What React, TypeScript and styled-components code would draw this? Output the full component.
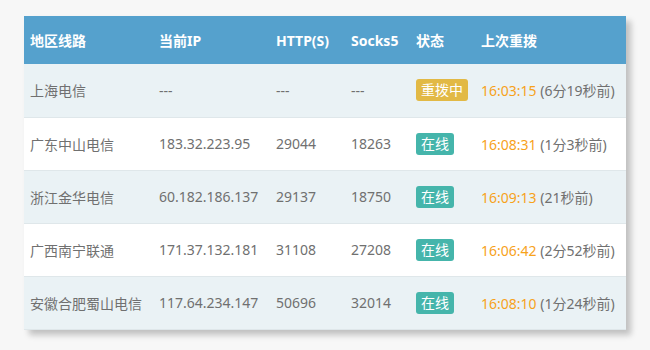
import React from 'react';
import styled, { createGlobalStyle } from 'styled-components';

const GlobalStyle = createGlobalStyle`
  html, body {
    margin: 0;
    padding: 0;
    background: #f7f7f7;
  }
  body {
    font-family: "Noto Sans", "Noto Sans CJK SC", sans-serif;
  }
  *, *::before, *::after {
    box-sizing: border-box;
  }
`;

const Page = styled.div`
  padding: 16px 24px;
`;

const Table = styled.table`
  width: 602px;
  border-collapse: collapse;
  table-layout: fixed;
  box-shadow: 5px 5px 6px rgba(0, 0, 0, 0.22);
  font-size: 14px;
  color: #707070;
`;

const Head = styled.th<{ $w: number }>`
  width: ${(p) => p.$w}px;
  height: 48px;
  padding: 0 0 0 6px;
  background: #55a1cd;
  color: #fff;
  font-weight: bold;
  text-align: left;
  white-space: nowrap;
`;

const Row = styled.tr<{ $odd: boolean }>`
  background: ${(p) => (p.$odd ? '#eaf2f5' : '#ffffff')};
  & td {
    border-bottom: 1px solid #dfe7ea;
  }
`;

const Cell = styled.td`
  height: 53px;
  padding: 0 0 0 6px;
  white-space: nowrap;
`;

const Badge = styled.span<{ $tone: 'wait' | 'ok' }>`
  display: inline-block;
  padding: 0 5px;
  height: 22px;
  line-height: 22px;
  border-radius: 3px;
  color: #fff;
  background: ${(p) => (p.$tone === 'wait' ? '#e2b945' : '#45b5ab')};
`;

const Time = styled.span`
  color: #f7a21b;
`;

const cols = [
  { label: '地区线路', w: 129 },
  { label: '当前IP', w: 117 },
  { label: 'HTTP(S)', w: 75 },
  { label: 'Socks5', w: 65 },
  { label: '状态', w: 65 },
  { label: '上次重拨', w: 151 },
];

const rows = [
  { area: '上海电信', ip: '---', http: '---', socks: '---', busy: true, time: '16:03:15', ago: '6分19秒前' },
  { area: '广东中山电信', ip: '183.32.223.95', http: '29044', socks: '18263', busy: false, time: '16:08:31', ago: '1分3秒前' },
  { area: '浙江金华电信', ip: '60.182.186.137', http: '29137', socks: '18750', busy: false, time: '16:09:13', ago: '21秒前' },
  { area: '广西南宁联通', ip: '171.37.132.181', http: '31108', socks: '27208', busy: false, time: '16:06:42', ago: '2分52秒前' },
  { area: '安徽合肥蜀山电信', ip: '117.64.234.147', http: '50696', socks: '32014', busy: false, time: '16:08:10', ago: '1分24秒前' },
];

export default function App() {
  return (
    <>
      <GlobalStyle />
      <Page>
        <Table>
          <thead>
            <tr>
              {cols.map((c) => (
                <Head key={c.label} $w={c.w}>{c.label}</Head>
              ))}
            </tr>
          </thead>
          <tbody>
            {rows.map((r, i) => (
              <Row key={r.area} $odd={i % 2 === 0}>
                <Cell>{r.area}</Cell>
                <Cell>{r.ip}</Cell>
                <Cell>{r.http}</Cell>
                <Cell>{r.socks}</Cell>
                <Cell>
                  <Badge $tone={r.busy ? 'wait' : 'ok'}>{r.busy ? '重拨中' : '在线'}</Badge>
                </Cell>
                <Cell>
                  <Time>{r.time}</Time> ({r.ago})
                </Cell>
              </Row>
            ))}
          </tbody>
        </Table>
      </Page>
    </>
  );
}
